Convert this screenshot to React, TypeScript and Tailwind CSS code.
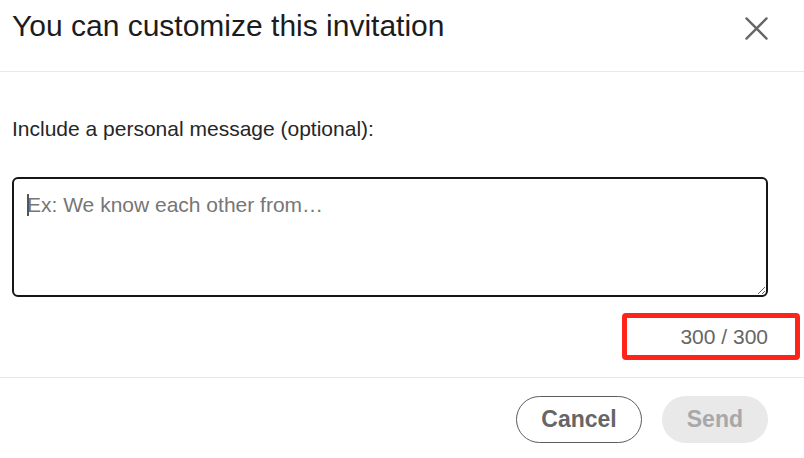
import React, { useState } from 'react';

export default function App() {
  const [message, setMessage] = useState('');
  const max = 300;

  return (
    <div className="w-[804px] h-[458px] bg-white font-['Liberation_Sans',Arial,sans-serif] flex flex-col">
      <div className="h-[72px] flex items-start justify-between pl-3 pr-9 pt-[9px] border-b border-[#e8e8e8]">
        <h2 className="text-[30px] leading-[34px] text-[#1c1c1c]">You can customize this invitation</h2>
        <button aria-label="Dismiss" className="mt-[8px] w-[23px] h-[23px] text-[#666666]">
          <svg viewBox="0 0 24 24" width="23" height="23" fill="none" stroke="currentColor" strokeWidth="2.4" strokeLinecap="round">
            <path d="M1.5 1.5 L22.5 22.5 M22.5 1.5 L1.5 22.5" />
          </svg>
        </button>
      </div>

      <div className="pl-3 pr-9 pt-[45px] pb-[17px] border-b border-[#e8e8e8]">
        <label htmlFor="msg" className="block text-[21px] leading-6 text-[#262626]">
          Include a personal message (optional):
        </label>
        <div className="relative mt-9">
          <textarea
            id="msg"
            value={message}
            maxLength={max}
            onChange={e => setMessage(e.target.value)}
            placeholder="Ex: We know each other from…"
            className="block w-full h-[120px] border-2 border-[#161616] rounded-[6px] pl-[13px] pt-[14px] text-[21px] leading-6 text-[#1c1c1c] placeholder:text-[#767676] outline-none"
          />
          <span className="absolute left-[15px] top-[17px] w-[2px] h-[22px] bg-[#555555]" />
        </div>
        <div className="mt-4 flex justify-end">
          <div className="-mr-8 w-[178px] h-[47px] border-[5px] border-[#fe2419] rounded-[4px] flex items-center justify-end pr-[27px] text-[21px] leading-6 text-[#666666]">
            {max - message.length} / {max}
          </div>
        </div>
      </div>

      <div className="flex justify-end gap-5 pr-9 pt-[18px]">
        <button className="h-[47px] px-6 rounded-full border border-[#5c5c5c] text-[23px] font-bold text-[#666666]">
          Cancel
        </button>
        <button disabled className="h-[47px] px-[25px] rounded-full bg-[#e9e9e9] text-[23px] font-bold text-[#a8a8a8]">
          Send
        </button>
      </div>
    </div>
  );
}
